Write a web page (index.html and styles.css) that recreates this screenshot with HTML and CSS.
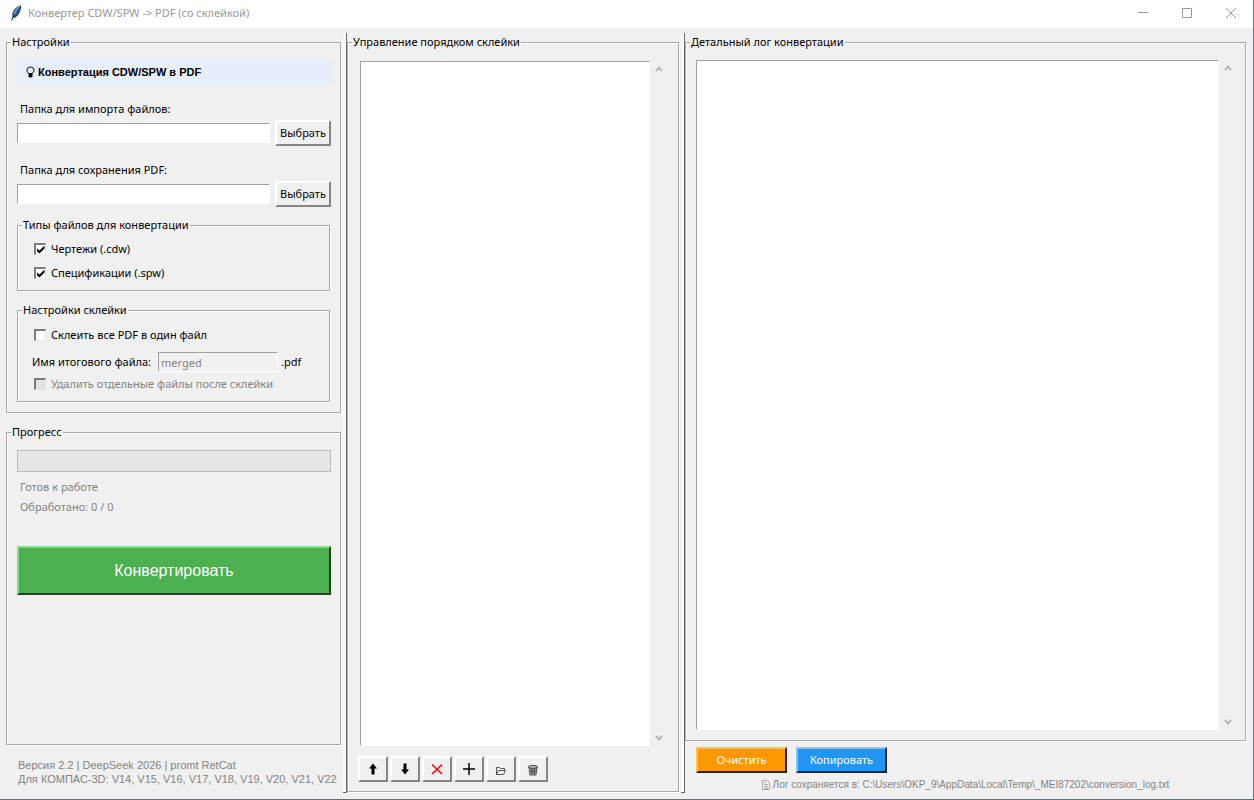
FILE: index.html
```
<!DOCTYPE html>
<html lang="ru">

<head>
  <meta charset="UTF-8" />
  <title>Конвертер CDW/SPW -> PDF (со склейкой)</title>
  <meta name="viewport" content="width=device-width, initial-scale=1.0" />
  <link rel="stylesheet" href="styles.css">
</head>

<body>
  <header class="titlebar">
    <svg class="feather" viewBox="0 0 12 16">
      <path d="M10.500 .500C7.500 1 3.500 4 2.500 8c-.5 2-.3 4 .3 5.300C6 13 9 9.500 10 5.500c.5-2 .7-4 .5-5z" fill="#2f5f95" />
      <path d="M10.500 .500C8 2 5 6 3.800 10.500" stroke="#9cc3e6" fill="none" />
      <path d="M10.500 .800c.300 3-1 8-5.500 11.500M4.500 9L1.500 15.500" stroke="#222a35" fill="none" />
    </svg>
    <h1>Конвертер CDW/SPW -&gt; PDF (со склейкой)</h1>
    <div class="window-controls">
      <button type="button" aria-label="Свернуть"><svg viewBox="0 0 10 10"><path d="M0 4.500h10" /></svg></button>
      <button type="button" aria-label="Развернуть"><svg viewBox="0 0 10 10"><path d="M.500 .500h9v9h-9z" /></svg></button>
      <button type="button" aria-label="Закрыть"><svg viewBox="0 0 10 10"><path d="M0 0l10 10M10 0L0 10" /></svg></button>
    </div>
  </header>

  <main class="panes">
    <section class="pane settings">
      <fieldset class="group">
        <legend>Настройки</legend>
        <h2 class="banner">
          <svg class="bulb" viewBox="0 0 9 12">
            <path d="M2.800 7.500C1.500 6.500 1 5.500 1 4.300 1 2.300 2.500 1 4.500 1S8 2.300 8 4.300c0 1.200-.5 2.200-1.800 3.200z" fill="none" stroke="#000" />
            <path d="M2.500 7.500h4v3l-1 1h-2l-1-1z" />
          </svg>
          Конвертация CDW/SPW в PDF
        </h2>

        <label class="path-label" for="importDir">Папка для импорта файлов:</label>
        <div class="path-row">
          <input type="text" id="importDir" class="entry">
          <button type="button" class="btn">Выбрать</button>
        </div>

        <label class="path-label" for="outputDir">Папка для сохранения PDF:</label>
        <div class="path-row">
          <input type="text" id="outputDir" class="entry">
          <button type="button" class="btn">Выбрать</button>
        </div>

        <fieldset class="group inner types">
          <legend>Типы файлов для конвертации</legend>
          <label class="check"><input type="checkbox" checked>Чертежи (.cdw)</label>
          <label class="check"><input type="checkbox" checked>Спецификации (.spw)</label>
        </fieldset>

        <fieldset class="group inner merge">
          <legend>Настройки склейки</legend>
          <label class="check"><input type="checkbox">Склеить все PDF в один файл</label>
          <div class="name-row">
            <label for="mergedName">Имя итогового файла:</label>
            <input type="text" id="mergedName" class="entry" value="merged" disabled>
            <span>.pdf</span>
          </div>
          <label class="check disabled"><input type="checkbox" disabled>Удалить отдельные файлы после склейки</label>
        </fieldset>
      </fieldset>

      <fieldset class="group progress-group">
        <legend>Прогресс</legend>
        <div class="progress" role="progressbar" aria-label="Прогресс" aria-valuenow="0" aria-valuemin="0" aria-valuemax="100"></div>
        <p class="status">Готов к работе</p>
        <p class="status">Обработано: 0 / 0</p>
        <button type="button" class="btn convert">Конвертировать</button>
      </fieldset>

      <footer class="version">
        Версия 2.2 | DeepSeek 2026 | promt RetCat<br>
        Для КОМПАС-3D: V14, V15, V16, V17, V18, V19, V20, V21, V22
      </footer>
    </section>

    <div class="sash"></div>

    <section class="pane order">
      <fieldset class="group order-group">
        <legend>Управление порядком склейки</legend>
        <div class="scroll-box">
          <select class="listbox" multiple aria-label="Порядок файлов"></select>
          <div class="scrollbar">
            <button type="button" aria-label="Вверх"><svg viewBox="0 0 8 6"><path d="M1 5l3-3.500L7 5" /></svg></button>
            <button type="button" aria-label="Вниз"><svg viewBox="0 0 8 6"><path d="M1 1l3 3.500L7 1" /></svg></button>
          </div>
        </div>
        <div class="tools">
          <button type="button" class="btn" aria-label="Переместить вверх">
            <svg viewBox="0 0 14 14"><path d="M7 1.500L11 6.500H8.500V12.500h-3V6.500H3z" /></svg>
          </button>
          <button type="button" class="btn" aria-label="Переместить вниз">
            <svg viewBox="0 0 14 14"><path d="M7 12.500L11 7.500H8.500V1.500h-3V7.500H3z" /></svg>
          </button>
          <button type="button" class="btn" aria-label="Удалить">
            <svg viewBox="0 0 14 14"><path d="M2 2.500l10 9.500M12 2.500L2 12" stroke="#f00" stroke-width="1.600" /></svg>
          </button>
          <button type="button" class="btn" aria-label="Добавить">
            <svg viewBox="0 0 14 14"><path d="M7 1v12M1 7h12" stroke="#000" stroke-width="1.500" /></svg>
          </button>
          <button type="button" class="btn" aria-label="Добавить папку">
            <svg viewBox="0 0 14 14"><path d="M2.500 12.500v-7h3l1 1h4v2M2.500 12.500l2-4h7l-2 4z" fill="none" stroke="#555" /></svg>
          </button>
          <button type="button" class="btn" aria-label="Очистить список">
            <svg viewBox="0 0 14 14">
              <path d="M3 5.500l1 7.500h6l1-7.500z" fill="#999" stroke="#555" />
              <path d="M2.500 5c0-1 2-1.500 4.500-1.500s4.500.5 4.500 1.500-2 1.200-4.500 1.200S2.500 6 2.500 5z" fill="#ccc" stroke="#333" />
              <path d="M5.500 7v5M7 7v5M8.500 7v5M4 9.500h6" stroke="#444" stroke-width=".7" />
            </svg>
          </button>
        </div>
      </fieldset>
    </section>

    <div class="sash"></div>

    <section class="pane log">
      <fieldset class="group log-group">
        <legend>Детальный лог конвертации</legend>
        <div class="scroll-box">
          <textarea class="log-text" aria-label="Лог"></textarea>
          <div class="scrollbar">
            <button type="button" aria-label="Вверх"><svg viewBox="0 0 8 6"><path d="M1 5l3-3.500L7 5" /></svg></button>
            <button type="button" aria-label="Вниз"><svg viewBox="0 0 8 6"><path d="M1 1l3 3.500L7 1" /></svg></button>
          </div>
        </div>
      </fieldset>
      <div class="log-actions">
        <button type="button" class="btn clear">Очистить</button>
        <button type="button" class="btn copy">Копировать</button>
      </div>
      <p class="log-path">
        <svg viewBox="0 0 8 10"><path d="M.500 .500h5l2 2v7h-7zM2 4.500h4M2 6.500h4M2 8.500h4M2 2.500h2" /></svg>
        Лог сохраняется в: C:\Users\OKP_9\AppData\Local\Temp\_MEI87202\conversion_log.txt
      </p>
    </section>
  </main>
</body>

</html>
```
FILE: styles.css
```
* {
  box-sizing: border-box;
}

body {
  margin: 0;
  min-height: 100vh;
  display: flex;
  flex-direction: column;
  background: #f0f0f0;
  border-right: 1px solid #68737f;
  border-bottom: 1px solid #5f7078;
  color: #000;
  font-family: "Noto Sans", sans-serif;
  font-size: 11px;
  line-height: 16px;
}

button,
input,
select,
textarea {
  font: inherit;
  border-radius: 0;
  outline: none;
}

/* Title bar */
.titlebar {
  display: flex;
  align-items: center;
  height: 28px;
  padding: 0 0 2px 10px;
  background: #fff;
  color: #999;
}

.titlebar h1 {
  flex: 1;
  margin: 0;
  font-size: 11px;
  font-weight: normal;
}

.feather {
  width: 12px;
  height: 16px;
  margin-right: 6px;
}

.window-controls {
  display: flex;
}

.window-controls button {
  width: 44px;
  height: 26px;
  padding: 0;
  border: none;
  background: none;
}

.window-controls svg {
  display: block;
  width: 10px;
  height: 10px;
  margin: auto;
  fill: none;
  stroke: #999;
}

/* Panes */
.panes {
  flex: 1;
  display: grid;
  grid-template-columns: 343fr 4px 334fr 4px 568fr;
  padding: 5px 0 6px;
}

.pane {
  display: flex;
  flex-direction: column;
  min-width: 0;
}

.sash {
  background: #f8f8f8;
  border-right: 1px solid #696969;
  border-bottom: 1px solid #696969;
}

.group {
  min-width: 0;
  margin: 0;
  padding: 0 9px 10px 10px;
  border: 1px solid #a9a9a9;
  box-shadow: 1px 1px 0 #fff, inset 1px 1px 0 #fff;
}

.group legend {
  margin-left: -6px;
  padding: 0 1px;
  background: #f0f0f0;
}

.btn {
  padding: 0 3px;
  border: 2px solid;
  border-color: #fff #858585 #858585 #fff;
  background: #f0f0f0;
  color: #000;
}

.entry {
  min-width: 0;
  height: 20px;
  padding: 0 2px;
  border: 1px solid;
  border-color: #a0a0a0 #fff #fff #a0a0a0;
  background: #fff;
}

.entry:disabled {
  background: #f0f0f0;
  color: #838383;
}

/* Left pane */
.settings {
  padding: 1px 2px 7px 6px;
}

.banner {
  display: flex;
  align-items: center;
  height: 24px;
  margin: 10px 0 17px;
  padding-left: 9px;
  background: #e6eefc;
  font-family: "Liberation Sans", sans-serif;
  font-size: 11px;
}

.bulb {
  width: 9px;
  height: 12px;
  margin-right: 3px;
}

.path-label {
  display: block;
  padding-left: 3px;
}

.path-row {
  display: flex;
  align-items: center;
  gap: 5px;
  margin: 3px 0 16px;
}

.path-row .entry {
  flex: 1;
}

.path-row .btn {
  width: 56px;
  height: 26px;
}

.inner {
  margin-right: 1px;
  padding: 0 15px 9px 14px;
}

.inner legend {
  margin-left: -10px;
}

.types {
  margin-top: -6px;
}

.check {
  display: flex;
  align-items: center;
}

.types .check {
  margin-top: 8px;
}

.check input {
  appearance: none;
  display: grid;
  place-items: center;
  width: 12px;
  height: 12px;
  margin: 0 5px 0 2px;
  border: 2px solid;
  border-width: 2px 1px 1px 2px;
  border-color: #7c7c7c #e3e3e3 #e3e3e3 #7c7c7c;
  background: #fff;
}

.check input:checked::before {
  content: "";
  width: 8px;
  height: 8px;
  background: #000;
  clip-path: polygon(0 30%, 38% 62%, 100% 0, 100% 38%, 38% 100%, 0 68%);
}

.check.disabled {
  color: #838383;
}

.check input:disabled {
  background: #e3e3e3;
}

.merge {
  margin-top: 11px;
}

.merge .check {
  margin-top: 9px;
}

.name-row {
  display: flex;
  align-items: center;
  gap: 3px;
  margin-top: 9px;
}

.name-row .entry {
  width: 120px;
  margin-left: 4px;
}

.merge .name-row + .check {
  margin-top: 4px;
}

.progress-group {
  flex: 1;
  margin-top: 11px;
}

.progress {
  height: 22px;
  margin: 10px 0 7px;
  border: 1px solid #bcbcbc;
  background: #e6e6e6;
}

.status {
  margin: 0 0 4px;
  padding-left: 3px;
  color: #838383;
}

.convert {
  display: block;
  width: 100%;
  height: 49px;
  margin-top: 31px;
  border-color: #7ee283 #26402a #26402a #7ee283;
  background: #4caf50;
  color: #fff;
  font-family: "Liberation Sans", sans-serif;
  font-size: 16px;
}

.version {
  margin-top: 13px;
  padding-left: 12px;
  color: #838383;
  font-family: "Liberation Sans", sans-serif;
  font-size: 11px;
  line-height: 14px;
  white-space: nowrap;
}

/* Merge order and log */
.order {
  padding: 1px 2px 1px 0;
}

.order-group,
.log-group {
  flex: 1;
}

.scroll-box {
  display: flex;
  gap: 1px;
}

.order .scroll-box {
  height: calc(100% - 35px);
  padding: 11px 3px 0 2px;
}

.listbox,
.log-text {
  flex: 1;
  min-width: 0;
  margin: 0;
  border: 1px solid;
  border-color: #a0a0a0 #fff #fff #a0a0a0;
  background: #fff;
  resize: none;
}

.scrollbar {
  display: flex;
  flex-direction: column;
  justify-content: space-between;
  width: 15px;
}

.scrollbar button {
  height: 16px;
  padding: 0;
  border: none;
  background: none;
}

.scrollbar svg {
  display: block;
  width: 8px;
  height: 6px;
  margin: auto;
  fill: none;
  stroke: #b8b8b8;
  stroke-width: 2;
}

.tools {
  display: flex;
  gap: 2px;
  padding-top: 10px;
}

.tools .btn {
  width: 30px;
  height: 26px;
  padding: 0;
}

.tools svg {
  display: block;
  width: 14px;
  height: 14px;
  margin: auto;
}

.log {
  padding: 1px 7px 0 0;
}

.log .scroll-box {
  height: 100%;
  padding: 10px 1px 0 0;
}

.log-actions {
  display: flex;
  gap: 9px;
  padding: 6px 11px 0;
}

.log-actions .btn {
  width: 91px;
  height: 26px;
  color: #fff;
}

.log-actions .clear {
  border-color: #ffc04d #222 #222 #ffc04d;
  background: #ff9800;
}

.log-actions .copy {
  border-color: #7cc4ff #222 #222 #7cc4ff;
  background: #2196f3;
}

.log-path {
  display: flex;
  align-items: center;
  justify-content: center;
  gap: 3px;
  margin: 4px 0 0;
  color: #838383;
  font-family: "Liberation Sans", sans-serif;
  font-size: 10px;
}

.log-path svg {
  width: 8px;
  height: 10px;
  fill: none;
  stroke: #aaa;
}
```
